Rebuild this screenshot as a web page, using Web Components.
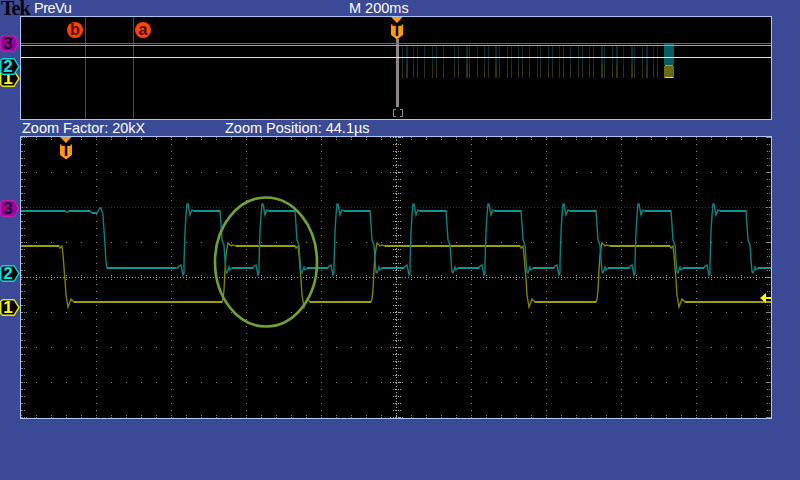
<!DOCTYPE html>
<html>
<head>
<meta charset="utf-8">
<style>
    html, body { margin: 0; padding: 0; background: #3a4a96; }
    body { width: 800px; height: 480px; overflow: hidden; font-family: "Liberation Sans", sans-serif; color: #fff; }
</style>
</head>
<body>
<scope-app>
    <scope-bar slot="header" columns="34px 315px auto" pad="0">
        <span style="font: bold 20px/17px 'Liberation Serif', serif; color: #06060e; letter-spacing: -1px; padding-left: 1px;">Tek</span>
        <span style="letter-spacing: -.5px;">PreVu</span>
        <span>M 200ms</span>
    </scope-bar>
    <scope-panel slot="overview">
        <scope-overview></scope-overview>
        <cursor-badge x="46" y="5">b</cursor-badge>
        <cursor-badge x="114" y="5">a</cursor-badge>
        <channel-marker y="18" stroke="#b020b0" fill="#a000a0" ink="#14001a">3</channel-marker>
        <channel-marker y="53" stroke="#e8e800" fill="#000" ink="#ffff00">1</channel-marker>
        <channel-marker y="41" stroke="#00d8d8" fill="#000" ink="#00e8e8">2</channel-marker>
        <trigger-marker x="369" y="0"></trigger-marker>
    </scope-panel>
    <scope-bar slot="zoom" columns="203px auto" pad="22px">
        <span>Zoom Factor: 20kX</span>
        <span>Zoom Position: 44.1µs</span>
    </scope-bar>
    <scope-panel slot="main">
        <scope-waveform></scope-waveform>
        <channel-marker y="63" stroke="#b020b0" fill="#a000a0" ink="#14001a">3</channel-marker>
        <channel-marker y="128" stroke="#00d8d8" fill="#000" ink="#00e8e8">2</channel-marker>
        <channel-marker y="162" stroke="#e8e800" fill="#000" ink="#ffff00">1</channel-marker>
        <trigger-marker x="38" y="0"></trigger-marker>
    </scope-panel>
</scope-app>

<script>
    const appTemplate = document.createElement('template');
    appTemplate.innerHTML = `
        <style>
            :host {
                display: grid;
                grid-template-rows: 16px 104px 16px 283px;
                width: 800px;
                height: 480px;
            }
        </style>
        <slot name="header"></slot>
        <slot name="overview"></slot>
        <slot name="zoom"></slot>
        <slot name="main"></slot>
    `;

    class ScopeApp extends HTMLElement {
        constructor() {
            super();
            this.attachShadow({ mode: 'open' });
            this.shadowRoot.appendChild(appTemplate.content.cloneNode(true));
        }
    }

    // one line of readouts above a panel
    class ScopeBar extends HTMLElement {
        constructor() {
            super();
            this.attachShadow({ mode: 'open' });
            const columns = this.getAttribute('columns');
            const pad = this.getAttribute('pad');
            this.shadowRoot.innerHTML = `
                <style>
                    :host {
                        display: grid;
                        grid-template-columns: ${columns};
                        padding-left: ${pad};
                        height: 16px;
                        font: 14.5px/16px "Liberation Sans", sans-serif;
                        color: #fff;
                        white-space: nowrap;
                    }
                </style>
                <slot></slot>
            `;
        }
    }

    class ScopePanel extends HTMLElement {
        constructor() {
            super();
            this.attachShadow({ mode: 'open' });
            this.shadowRoot.innerHTML = `
                <style>
                    :host {
                        display: block;
                        position: relative;
                        box-sizing: border-box;
                        margin-left: 20px;
                        width: 752px;
                        border: 1px solid #a8c8f4;
                        background: #000;
                    }
                </style>
                <slot></slot>
            `;
        }
    }

    class ChannelMarker extends HTMLElement {
        constructor() {
            super();
            this.attachShadow({ mode: 'open' });
            const y = this.getAttribute('y');
            const stroke = this.getAttribute('stroke');
            const fill = this.getAttribute('fill');
            const ink = this.getAttribute('ink');
            this.shadowRoot.innerHTML = `
                <style>
                    :host {
                        position: absolute;
                        left: -21px;
                        top: ${y}px;
                        display: block;
                        width: 20px;
                        height: 17px;
                    }
                    svg { position: absolute; left: 0; top: 0; }
                    span {
                        position: relative;
                        display: block;
                        width: 16px;
                        text-align: center;
                        font: bold 17px/17px "Liberation Sans", sans-serif;
                        color: ${ink};
                    }
                </style>
                <svg width="20" height="17" viewBox="0 0 20 17">
                    <path d="M2.500 .7H14L19 8.500 14 16.300H2.500L.7 14.500V2.500Z" fill="${fill}" stroke="${stroke}" stroke-width="1.400"/>
                </svg>
                <span><slot></slot></span>
            `;
        }
    }

    class TriggerMarker extends HTMLElement {
        constructor() {
            super();
            this.attachShadow({ mode: 'open' });
            const x = this.getAttribute('x');
            const y = this.getAttribute('y');
            this.shadowRoot.innerHTML = `
                <style>
                    :host {
                        position: absolute;
                        left: ${x}px;
                        top: ${y}px;
                        display: block;
                        width: 14px;
                        height: 23px;
                    }
                    svg { display: block; }
                    span {
                        position: absolute;
                        left: 0;
                        top: 6px;
                        width: 14px;
                        text-align: center;
                        font: bold 16px/16px "Liberation Sans", sans-serif;
                        color: #000;
                    }
                </style>
                <svg width="14" height="23" viewBox="0 0 14 23">
                    <path d="M1 0H12.500L7 6Z" fill="#ff9a10"/>
                    <path d="M2 7H12L13 8V18L7 22.500 1 18V8Z" fill="#ff9a10"/>
                </svg>
                <span>T</span>
            `;
        }
    }

    class CursorBadge extends HTMLElement {
        constructor() {
            super();
            this.attachShadow({ mode: 'open' });
            const x = this.getAttribute('x');
            const y = this.getAttribute('y');
            this.shadowRoot.innerHTML = `
                <style>
                    :host {
                        position: absolute;
                        left: ${x}px;
                        top: ${y}px;
                        display: flex;
                        align-items: center;
                        justify-content: center;
                        width: 16px;
                        height: 16px;
                        border-radius: 50%;
                        background: #ff4200;
                        color: #4a0e00;
                        font: bold 16px/16px "Liberation Sans", sans-serif;
                    }
                </style>
                <slot></slot>
            `;
        }
    }

    function dotPath(points) {
        return points.map(([x, y]) => `M${x} ${y + 0.5}h1`).join('');
    }

    // the burst lines of the record, seen from far away
    const BURSTS = [402, 406, 413, 417, 424, 432, 436, 443, 454, 458, 466, 469, 477, 484, 488, 495, 499,
        507, 511, 518, 522, 529, 537, 540, 548, 552, 559, 563, 570, 578, 582, 589, 593, 601, 604, 612,
        616, 623, 631, 634, 642, 646, 653, 657];
    const THICK = [406, 466, 495, 601, 616, 631, 646];

    class ScopeOverview extends HTMLElement {
        constructor() {
            super();
            this.attachShadow({ mode: 'open' });
            let bursts = '';
            for (const x of BURSTS) {
                const w = THICK.includes(x) ? 2 : 1;
                bursts += `<rect x="${x}" y="46" width="${w}" height="19" fill="#062e32"/>`;
                bursts += `<rect x="${x}" y="65" width="${w}" height="13" fill="#33320a"/>`;
            }
            this.shadowRoot.innerHTML = `
                <style>
                    :host { display: block; width: 750px; height: 102px; }
                    svg { display: block; }
                </style>
                <svg width="750" height="102" viewBox="21 17 750 102" shape-rendering="crispEdges">
                    <rect x="85" y="17" width="1" height="102" fill="#a010a0"/>
                    <rect x="133" y="17" width="1" height="102" fill="#a010a0"/>
                    ${bursts}
                    <rect x="396" y="39" width="3" height="68" fill="#8e8686"/>
                    <path d="M396 109.500h-2.500v7h2.500M400 109.500h2.500v7h-2.500" fill="none" stroke="#8e8686"/>
                    <rect x="664" y="44" width="10" height="21" fill="#0a5c5e"/>
                    <rect x="664" y="66" width="10" height="12" fill="#6c6a10"/>
                    <rect x="665" y="65" width="8" height="1" fill="#20c4c4"/>
                    <rect x="665" y="77" width="8" height="1" fill="#f0f000"/>
                    <rect x="21" y="43" width="750" height="1" fill="#f010d0"/>
                    <rect x="21" y="45" width="750" height="1" fill="#10e0e0"/>
                    <rect x="21" y="57" width="750" height="1" fill="#ffff10"/>
                </svg>
            `;
        }
    }

    function gridDots() {
        const minor = [];
        const major = [];
        for (let k = 0; k <= 8; k++) {
            const y = 137 + 35 * k;
            for (let i = 0; i <= 50; i++) minor.push([21 + 15 * i, y]);
            for (const x of [22, 24, 26, 766, 768, 770]) minor.push([x, y]);
            for (let x = 390; x <= 403; x += 3) major.push([x, y]);
        }
        for (let j = 0; j <= 10; j++) {
            const x = 21 + 75 * j;
            for (let i = 0; i <= 40; i++) minor.push([x, 137 + 7 * i]);
        }
        for (let i = 0; i <= 40; i++) {
            const y = 137 + 7 * i;
            minor.push([22, y], [24, y], [767, y], [769, y]);
            major.push([393, y], [395, y], [398, y], [400, y]);
        }
        for (let i = 0; i <= 50; i++) {
            const x = 21 + 15 * i;
            minor.push([x, 139], [x, 415]);
            major.push([x, 275], [x, 279]);
        }
        for (let x = 21; x < 771; x += 3) major.push([x, 277]);
        for (let y = 137; y < 418; y += 3) major.push([396, y]);
        return { minor: dotPath(minor), major: dotPath(major) };
    }

    function tealTrace() {
        const pts = [[21, 211], [65, 211], [66, 212], [68, 212], [69, 211], [90, 211], [92, 213], [97, 213],
            [100, 208], [101, 208], [103, 215], [104, 230], [105, 245], [106, 262], [107, 268], [176, 268]];
        for (let k = 0; k < 8; k++) {
            const p = 187 + Math.round(75.2 * k);
            const f = p + 33;
            pts.push([p - 9, 268], [p - 8, 266], [p - 6, 265], [p - 5, 270], [p - 4, 275], [p - 3, 273], [p - 3, 262],
                [p - 2, 232], [p - 1, 215], [p, 204], [p + 1, 204], [p + 3, 215], [p + 5, 210], [p + 7, 211],
                [f, 211], [f + 1, 225], [f + 2, 240], [f + 4, 245], [f + 5, 260], [f + 6, 272], [f + 7, 273],
                [f + 9, 267], [f + 10, 270], [f + 12, 268]);
        }
        pts.push([771, 268]);
        return pts;
    }

    function yellowTrace() {
        const rise = b => [[b, 302], [b + 1, 299], [b + 2, 290], [b + 3, 270], [b + 4, 255], [b + 6, 243],
            [b + 9, 246], [b + 11, 245], [b + 14, 246]];
        const fall = f => [[f, 246], [f + 1, 248], [f + 3, 246], [f + 4, 255], [f + 6, 280], [f + 7, 295],
            [f + 9, 307], [f + 12, 299], [f + 15, 302]];
        return [[21, 246], ...fall(59), ...rise(222), ...fall(295), ...rise(371), ...fall(520), ...rise(596),
            ...fall(670), [771, 302]];
    }

    function linePath(points) {
        return 'M' + points.map(p => p.join(' ')).join('L');
    }

    function flatPath(points) {
        let d = '';
        for (let i = 1; i < points.length; i++) {
            const [x0, y0] = points[i - 1];
            const [x1, y1] = points[i];
            if (x1 - x0 > 3 && Math.abs(y1 - y0) < 2) d += `M${x0} ${y0}L${x1} ${y1}`;
        }
        return d;
    }

    class ScopeWaveform extends HTMLElement {
        constructor() {
            super();
            this.attachShadow({ mode: 'open' });
            const grid = gridDots();
            const teal = tealTrace();
            const yellow = yellowTrace();
            this.shadowRoot.innerHTML = `
                <style>
                    :host { display: block; width: 750px; height: 281px; }
                    svg { display: block; }
                    .trace { fill: none; stroke-width: 1.4; }
                </style>
                <svg width="750" height="281" viewBox="21 137 750 281">
                    <g shape-rendering="crispEdges" fill="none">
                        <path d="${grid.minor}" stroke="#8c8670"/>
                        <path d="${grid.major}" stroke="#a89f86"/>
                        <path d="M21 207.500H771" stroke="#601060" stroke-dasharray="1 2"/>
                    </g>
                    <path class="trace" d="${linePath(yellow)}" stroke="#808000"/>
                    <path class="trace" d="${flatPath(yellow)}" stroke="#b4b400"/>
                    <path class="trace" d="${linePath(teal)}" stroke="#0b8080"/>
                    <path class="trace" d="${flatPath(teal)}" stroke="#10a8a8"/>
                    <ellipse cx="266" cy="262" rx="51" ry="64.500" fill="none" stroke="#6fa332" stroke-width="2.600"/>
                    <path d="M760 298L766 293V297H771V299H766V303Z" fill="#ffff00"/>
                </svg>
            `;
        }
    }

    customElements.define('scope-app', ScopeApp);
    customElements.define('scope-bar', ScopeBar);
    customElements.define('scope-panel', ScopePanel);
    customElements.define('channel-marker', ChannelMarker);
    customElements.define('trigger-marker', TriggerMarker);
    customElements.define('cursor-badge', CursorBadge);
    customElements.define('scope-overview', ScopeOverview);
    customElements.define('scope-waveform', ScopeWaveform);
</script>
</body>
</html>
